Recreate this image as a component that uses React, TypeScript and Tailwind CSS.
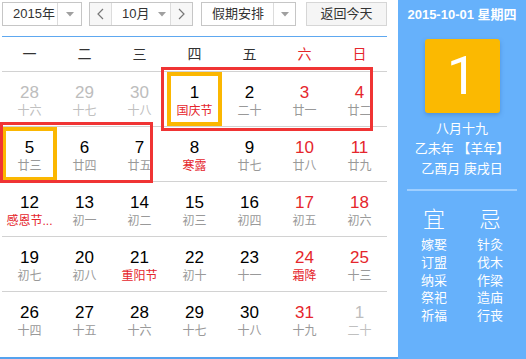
import React from 'react';

type Day = {
  n: number;
  l: string;
  red?: boolean;
  fest?: boolean;
  other?: boolean;
  pick?: boolean;
};

const rows: Day[][] = [
  [
    { n: 28, l: '十六', other: true },
    { n: 29, l: '十七', other: true },
    { n: 30, l: '十八', other: true },
    { n: 1, l: '国庆节', fest: true, pick: true },
    { n: 2, l: '二十' },
    { n: 3, l: '廿一', red: true },
    { n: 4, l: '廿二', red: true },
  ],
  [
    { n: 5, l: '廿三', pick: true },
    { n: 6, l: '廿四' },
    { n: 7, l: '廿五' },
    { n: 8, l: '寒露', fest: true },
    { n: 9, l: '廿七' },
    { n: 10, l: '廿八', red: true },
    { n: 11, l: '廿九', red: true },
  ],
  [
    { n: 12, l: '感恩节...', fest: true },
    { n: 13, l: '初一' },
    { n: 14, l: '初二' },
    { n: 15, l: '初三' },
    { n: 16, l: '初四' },
    { n: 17, l: '初五', red: true },
    { n: 18, l: '初六', red: true },
  ],
  [
    { n: 19, l: '初七' },
    { n: 20, l: '初八' },
    { n: 21, l: '重阳节', fest: true },
    { n: 22, l: '初十' },
    { n: 23, l: '十一' },
    { n: 24, l: '霜降', red: true, fest: true },
    { n: 25, l: '十三', red: true },
  ],
  [
    { n: 26, l: '十四' },
    { n: 27, l: '十五' },
    { n: 28, l: '十六' },
    { n: 29, l: '十七' },
    { n: 30, l: '十八' },
    { n: 31, l: '十九', red: true },
    { n: 1, l: '二十', other: true },
  ],
];

const weekdays = ['一', '二', '三', '四', '五', '六', '日'];
const yi = ['嫁娶', '订盟', '纳采', '祭祀', '祈福'];
const ji = ['针灸', '伐木', '作梁', '造庙', '行丧'];

function Caret() {
  return (
    <svg width="8" height="5" viewBox="0 0 8 5">
      <path d="M0 0h8L4 4.5z" fill="#a0a0a0" />
    </svg>
  );
}

function Chevron({ dir }: { dir: 'l' | 'r' }) {
  return (
    <svg width="7" height="12" viewBox="0 0 7 12">
      <path
        d={dir === 'l' ? 'M6 1L1 6l5 5' : 'M1 1l5 5-5 5'}
        fill="none"
        stroke="#777"
        strokeWidth="1.2"
      />
    </svg>
  );
}

function Cell({ d }: { d: Day }) {
  const numColor = d.other ? 'text-[#bdbdbd]' : d.red ? 'text-[#e5262c]' : 'text-black';
  const lunarColor = d.other ? 'text-[#c0c0c0]' : d.fest ? 'text-[#e5262c]' : 'text-[#999]';
  return (
    <div
      className={`h-[54px] flex flex-col items-center ${
        d.pick ? 'border-4 border-[#fbb701] pt-[8px]' : 'pt-[12px]'
      }`}
    >
      <span className={`text-[17px] leading-[17px] ${numColor}`}>{d.n}</span>
      <span className={`mt-[3px] text-[12px] leading-[14px] whitespace-nowrap ${lunarColor}`}>{d.l}</span>
    </div>
  );
}

export default function App() {
  return (
    <div
      className="w-[526px] h-[359px] flex bg-white overflow-hidden"
      style={{ fontFamily: '"Liberation Sans", "Noto Sans CJK SC", sans-serif' }}
    >
      {/* left: calendar */}
      <div className="relative w-[398px] h-[359px] border-b-2 border-[#55a2ee] pl-[2px]">
        {/* toolbar */}
        <div className="h-[36px] flex items-start pt-[2px] text-[13px] text-[#333]">
          <div className="flex h-[24px] w-[80px] border border-[#c6c6c6]">
            <div className="w-[54px] flex items-center pl-[10px]">2015年</div>
            <div className="flex-1 flex items-center justify-center border-l border-[#dcdcdc]">
              <Caret />
            </div>
          </div>
          <div className="ml-[7px] flex h-[24px] w-[104px] border border-[#c6c6c6]">
            <div className="w-[22px] flex items-center justify-center bg-[#f7f7f7] border-r border-[#dcdcdc]">
              <Chevron dir="l" />
            </div>
            <div className="flex-1 flex items-center pl-[10px] gap-[9px]">
              <span>10月</span>
              <Caret />
            </div>
            <div className="w-[22px] flex items-center justify-center bg-[#f7f7f7] border-l border-[#dcdcdc]">
              <Chevron dir="r" />
            </div>
          </div>
          <div className="ml-[8px] flex h-[24px] w-[95px] border border-[#c6c6c6]">
            <div className="w-[71px] flex items-center pl-[10px]">假期安排</div>
            <div className="flex-1 flex items-center justify-center border-l border-[#dcdcdc]">
              <Caret />
            </div>
          </div>
          <div className="ml-[10px] h-[24px] w-[81px] flex items-center justify-center border border-[#d6d6d6] bg-[#f5f5f5]">
            返回今天
          </div>
        </div>
        <div className="w-[385px] h-px bg-[#5ea8f0]" />

        {/* weekday header */}
        <div className="w-[385px] h-[34px] grid grid-cols-7 items-center text-[14px]">
          {weekdays.map((w, i) => (
            <div key={w} className={`text-center ${i > 4 ? 'text-[#e5262c]' : 'text-[#333]'}`}>
              {w}
            </div>
          ))}
        </div>

        {/* days */}
        {rows.map((r, ri) => (
          <div key={ri} className="w-[385px] grid grid-cols-7 border-t border-[#d2d2d2]">
            {r.map((d, di) => (
              <Cell key={di} d={d} />
            ))}
          </div>
        ))}

        {/* annotation boxes */}
        <div className="absolute left-[161px] top-[67px] w-[212px] h-[64px] border-[3px] border-[#f03434]" />
        <div className="absolute left-0 top-[122px] w-[153px] h-[61px] border-[3px] border-[#f03434]" />
      </div>

      {/* right: day detail */}
      <div className="flex-1 h-[359px] bg-[#66b1fb] flex flex-col items-center text-white">
        <div className="mt-[7px] text-[13px] leading-[16px] font-bold whitespace-nowrap">2015-10-01 星期四</div>
        <div className="mt-[16px] w-[75px] h-[74px] rounded-[3px] bg-[#fbb901] shadow-[0_2px_4px_rgba(40,90,160,0.35)] flex items-center justify-center text-[54px] leading-none font-['Roboto',sans-serif]">
          1
        </div>
        <div className="mt-[6px] text-[13px] leading-[20px] text-center">
          <div>八月十九</div>
          <div>乙未年 【羊年】</div>
          <div>乙酉月 庚戌日</div>
        </div>
        <div className="mt-[10px] w-[110px] h-[2px] bg-[#9fcfff]" />
        <div className="mt-[16px] flex gap-[31px]">
          <div className="flex flex-col items-center w-[25px]">
            <div className="text-[22px] leading-[26px] font-light">宜</div>
            <div className="mt-[3px] text-[13px] leading-[17.75px] text-center whitespace-nowrap">
              {yi.map((t) => (
                <div key={t}>{t}</div>
              ))}
            </div>
          </div>
          <div className="flex flex-col items-center w-[25px]">
            <div className="text-[22px] leading-[26px] font-light">忌</div>
            <div className="mt-[3px] text-[13px] leading-[17.75px] text-center whitespace-nowrap">
              {ji.map((t) => (
                <div key={t}>{t}</div>
              ))}
            </div>
          </div>
        </div>
      </div>
    </div>
  );
}
